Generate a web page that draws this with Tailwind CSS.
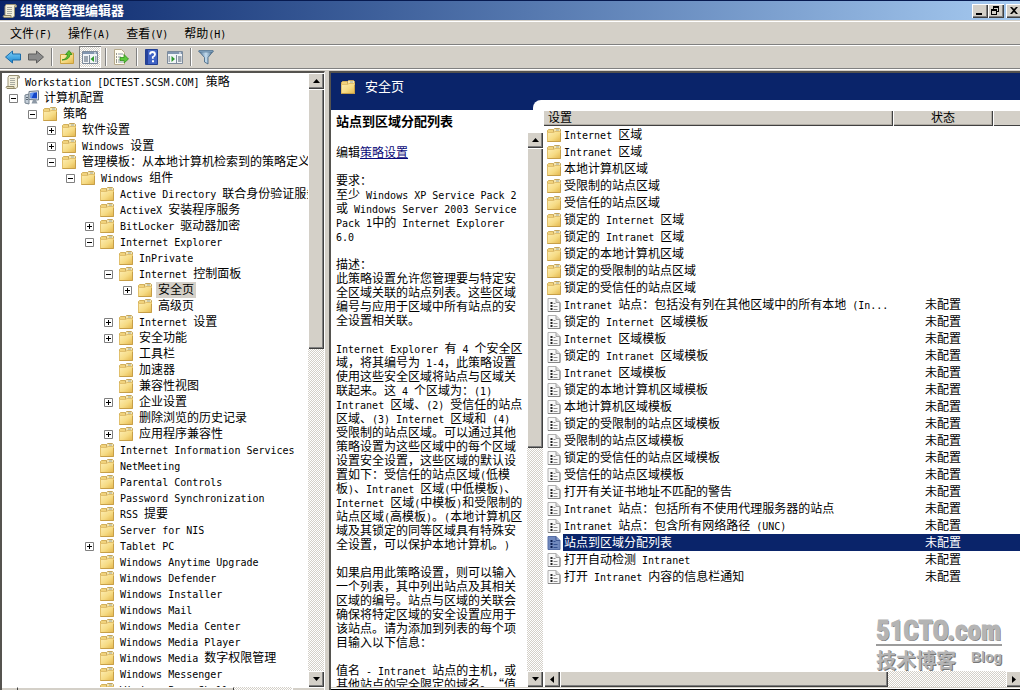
<!DOCTYPE html>
<html lang="zh-CN">
<head>
<meta charset="utf-8">
<title>组策略管理编辑器</title>
<script src="https://cdn.jsdelivr.net/npm/@tailwindcss/browser@4"></script>
</head>
<body class="h-screen overflow-hidden flex flex-col bg-[#d4d0c8] text-black text-[12px] leading-[16px] font-['DejaVu_Sans_Mono','Noto_Sans_CJK_SC',monospace] [text-spacing-trim:space-all]">

<svg class="absolute size-0" aria-hidden="true">
  <defs>
    <linearGradient id="fold" x1="0" y1="0" x2="1" y2="1"><stop offset="0" stop-color="#fdeeb4"/><stop offset=".55" stop-color="#f6db84"/><stop offset="1" stop-color="#e3b64c"/></linearGradient>
    <linearGradient id="blue" x1="0" y1="0" x2="0" y2="1"><stop offset="0" stop-color="#7fd0f8"/><stop offset="1" stop-color="#1a86d0"/></linearGradient>
    <linearGradient id="steel" x1="0" y1="0" x2="1" y2="0"><stop offset="0" stop-color="#4d7396"/><stop offset=".5" stop-color="#c4dcee"/><stop offset="1" stop-color="#3d6284"/></linearGradient>
  </defs>
  <symbol id="folder" viewBox="0 0 14 14">
    <path d="M.5 2.500 1.500 1.500H6L7 3V13H.5Z" fill="#f0d27c" stroke="#d3b05a"/>
    <path d="M6.500 3.500V1.500L7.500 .5H12.500L13.500 1.500V5H6.500Z" fill="#f7e6ac" stroke="#c4a45a"/>
    <path d="M9 2H12" stroke="#9aa9a8"/>
    <path d="M.5 4.500H6.500L8 3.500H13.500V13.500H.5Z" fill="url(#fold)" stroke="#e2c06c"/>
    <path d="M.5 13.500H13.500V5" fill="none" stroke="#c79f48"/>
  </symbol>
  <symbol id="doc" viewBox="0 0 13 14">
    <path d="M.5 .5H8.500L12.500 4.500V13.500H.5Z" fill="#f8f8f8" stroke="#b0b0b0"/>
    <path d="M8.500 .5V4.500H12.500" fill="#d6d6d6" stroke="#a3a3a3"/>
    <path d="M.5 13.500H12.500V5" fill="none" stroke="#858585"/>
    <path d="M3 4h2v2H3zM3 7h2v2H3zM3 10h2v2H3z" fill="#222"/>
    <path d="M6 5.500H8M6 8.500H10M6 11.500H10" stroke="#8e8e8e"/>
  </symbol>
  <symbol id="docsel" viewBox="0 0 13 14">
    <path d="M.5 .5H8.500L12.500 4.500V13.500H.5Z" fill="#7088bd" stroke="#566ea6"/>
    <path d="M8.500 .5V4.500H12.500" fill="#8c9fcb" stroke="#3f5894"/>
    <path d="M3 4h2v2H3zM3 7h2v2H3zM3 10h2v2H3z" fill="#0a1c50"/>
    <path d="M6 5.500H8M6 8.500H10M6 11.500H10" stroke="#33508f"/>
  </symbol>
  <symbol id="scroll" viewBox="0 0 16 16">
    <path d="M4 1.500H13Q15 1.500 14.500 4H12.500V13L11 14.500H3V3.500Z" fill="#f4f0dc" stroke="#9b9376"/>
    <path d="M1.500 12.500H9V14.500H2Q.5 13.500 1.500 12.500Z" fill="#e4ddbc" stroke="#8f8768"/>
    <path d="M12.500 4Q12.500 2 14 1.800" fill="none" stroke="#9b9376"/>
    <path d="M5 4.500H10M5 6.500H10M5 8.500H10M5 10.500H10" stroke="#a7a9a0"/>
  </symbol>
  <symbol id="computer" viewBox="0 0 16 16">
    <path d="M1 5 5 4V14L1 13Z" fill="#c6d0da" stroke="#75828f"/>
    <path d="M5 1.500 14.500 .8V10L5 9.500Z" fill="#e2e6ea" stroke="#6f7c8a"/>
    <path d="M6.500 3 13 2.300V8.600L6.500 8.300Z" fill="#1446c8"/>
    <path d="M6.500 3 10 2.700 7.500 8.300H6.500Z" fill="#5f94f4"/>
    <path d="M9 10H12L13.500 13.500H7.500Z" fill="#8d99a6"/>
    <path d="M2 7.500H4M2 9.500H4" stroke="#5c6874"/>
  </symbol>
</svg>

<header class="shrink-0 h-[20px] pl-[2px] flex items-center gap-[2px] border-t border-[#071a50] overflow-hidden bg-linear-to-r from-[#0a246a] to-[#a6caf0]">
  <svg class="size-4 shrink-0"><use href="#scroll"/></svg>
  <h1 class="flex-1 text-[13px] font-bold text-white">组策略管理编辑器</h1>
  <div class="flex -mr-[2px]">
    <button aria-label="最小化" class="w-4 h-[14px] flex bg-[#d4d0c8] shadow-[inset_1px_1px_0_#fff,inset_-1px_-1px_0_#404040,inset_-2px_-2px_0_#808080]"><svg class="w-4 h-[14px]" viewBox="0 0 16 14"><path d="M4 9h6v2H4z"/></svg></button>
    <button aria-label="还原" class="w-4 h-[14px] flex bg-[#d4d0c8] shadow-[inset_1px_1px_0_#fff,inset_-1px_-1px_0_#404040,inset_-2px_-2px_0_#808080]"><svg class="w-4 h-[14px]" viewBox="0 0 16 14"><path d="M5 2h6v6H9V7h1V4H6v1H5zM3 5h6v6H3zM4 7v3h4V7z" fill-rule="evenodd"/></svg></button>
    <button aria-label="关闭" class="ml-[2px] w-4 h-[14px] flex bg-[#d4d0c8] shadow-[inset_1px_1px_0_#fff,inset_-1px_-1px_0_#404040,inset_-2px_-2px_0_#808080]"><svg class="w-4 h-[14px]" viewBox="0 0 16 14"><path d="M4 3h2l2 2 2-2h2L9 6.500 12 10h-2L8 8l-2 2H4l3-3.500z"/></svg></button>
  </div>
</header>

<nav class="shrink-0 mt-px h-[24px] pl-[10px] pt-[2px] flex items-center gap-4 border-t border-t-white border-b border-b-[#808080]">
  <button data-mixed>文件(F)</button>
  <button data-mixed>操作(A)</button>
  <button data-mixed>查看(V)</button>
  <button data-mixed>帮助(H)</button>
</nav>

<div class="shrink-0 h-[24px] pl-[2px] flex items-center border-t border-t-white border-b border-b-[#808080]">
  <button aria-label="后退" class="size-[22px] grid place-items-center"><svg class="size-4" viewBox="0 0 16 16"><path d="M.5 8 7.500 2V5H15.500V11H7.500V14Z" fill="url(#blue)" stroke="#1b6ba8"/></svg></button>
  <button aria-label="前进" class="ml-px size-[22px] grid place-items-center"><svg class="size-4" viewBox="0 0 16 16"><path d="M15.500 8 8.500 2V5H.5V11H8.500V14Z" fill="#8c8c8c" stroke="#5c5c5c"/></svg></button>
  <i class="mx-1 mr-[3px] w-[2px] h-[18px] border-l border-[#808080] bg-white"></i>
  <button aria-label="向上一级" class="size-[22px] grid place-items-center"><svg class="size-4" viewBox="0 0 16 16"><path d="M1.500 5.500H8L9.500 4H14.500V14.500H1.500Z" fill="url(#fold)" stroke="#c9a040"/><path d="M3 11Q8 10 8.500 5.500H6.500L10 1.500 13 5.500H11Q10.500 11 3 11Z" fill="#58c02e" stroke="#2e8a18" stroke-width=".8"/></svg></button>
  <button aria-label="显示/隐藏控制台树" aria-pressed="true" class="ml-px size-[22px] grid place-items-center bg-[repeating-conic-gradient(#fff_0_25%,#d4d0c8_0_50%)] bg-[length:2px_2px] shadow-[inset_1px_1px_0_#808080,inset_-1px_-1px_0_#fff]"><svg class="size-4" viewBox="0 0 16 16"><path d="M.5 2.500h15v12H.5z" fill="#f2f5f8" stroke="#7d8b9b"/><path d="M1 3h14v2H1z" fill="#8296b0"/><path d="M12 4h2" stroke="#fff"/><path d="M7.500 6V14" stroke="#7d8b9b"/><path d="M2 8h4M2 10h4M2 12h4M13 8h1.500M13 10h1.500M13 12h1.500" stroke="#4a5a6c"/><path d="M12 7V13L8.500 10Z" fill="#2f9a2f"/></svg></button>
  <i class="mx-1 mr-[3px] w-[2px] h-[18px] border-l border-[#808080] bg-white"></i>
  <button aria-label="导出列表" class="size-[22px] grid place-items-center"><svg class="size-4" viewBox="0 0 16 16"><path d="M1.500 .5H8.500L11.500 3.500V15.500H1.500Z" fill="#fffdf0" stroke="#b5a98a"/><path d="M3 5h1M3 8h1M3 11h1M3 13h1" stroke="#333"/><path d="M5 5h5M5 8h3M5 11h3M5 13h5" stroke="#8e98a8"/><path d="M7 8.500H11V5.500L15.500 10 11 14V11.500H7Z" fill="#5cc83c" stroke="#2f8f1c" stroke-width=".8"/></svg></button>
  <i class="mx-1 mr-[3px] w-[2px] h-[18px] border-l border-[#808080] bg-white"></i>
  <button aria-label="帮助" class="size-[22px] grid place-items-center"><svg class="size-4" viewBox="0 0 16 16"><path d="M1.500 .5H13.500V15.500H1.500Z" fill="#3f62c4" stroke="#223f92"/><path d="M2 1h2v14H2z" fill="#27429a"/><path d="M6 5.500Q6 3 8.500 3T11 5.500Q11 7 8.800 8V9.800" fill="none" stroke="#fff" stroke-width="1.800"/><path d="M8 11.200h2v2H8z" fill="#fff"/></svg></button>
  <button aria-label="显示/隐藏操作窗格" class="ml-px size-[22px] grid place-items-center"><svg class="size-4" viewBox="0 0 16 16"><path d="M.5 2.500h15v12H.5z" fill="#f2f5f8" stroke="#7d8b9b"/><path d="M1 3h14v2H1z" fill="#8296b0"/><path d="M12 4h2" stroke="#fff"/><path d="M9.500 6V14" stroke="#7d8b9b"/><path d="M11 8h3.500M11 10h3.500M11 12h3.500M1.500 8H3M1.500 10H3M1.500 12H3" stroke="#4a5a6c"/><path d="M4.500 7V13L8 10Z" fill="#2f9a2f"/></svg></button>
  <i class="mx-1 mr-[3px] w-[2px] h-[18px] border-l border-[#808080] bg-white"></i>
  <button aria-label="筛选器" class="size-[22px] grid place-items-center"><svg class="size-4" viewBox="0 0 16 16"><path d="M.7 2H15.300L10 8.500V15L6.500 13V8.500Z" fill="url(#steel)" stroke="#3f6180" stroke-width=".8"/><path d="M1 1.500H15V3H1Z" fill="#8fb0cc" stroke="#4a6b89" stroke-width=".6"/></svg></button>
</div>

<main class="flex-1 min-h-0 flex border-t border-t-white">
  <aside class="w-[325px] shrink-0 mt-px flex flex-col border-l-2 border-t-2 border-[#55534f] border-r border-r-white">
    <div class="flex-1 min-h-0 flex bg-white">
      <ul id="tree" role="tree" class="flex-1 min-w-0 pt-px overflow-hidden whitespace-nowrap"></ul>
      <div class="w-4 flex flex-col bg-[repeating-conic-gradient(#fff_0_25%,#d4d0c8_0_50%)] bg-[length:2px_2px]">
        <button aria-label="向上滚动" class="size-4 grid place-items-center bg-[#d4d0c8] shadow-[inset_1px_1px_0_#fff,inset_-1px_-1px_0_#404040,inset_-2px_-2px_0_#808080]"><svg class="w-[7px] h-1" viewBox="0 0 7 4"><path d="M0 4 3.500 0 7 4Z"/></svg></button>
        <div class="h-[260px] bg-[#d4d0c8] shadow-[inset_1px_1px_0_#fff,inset_-1px_-1px_0_#404040,inset_-2px_-2px_0_#808080]"></div>
        <button aria-label="向下滚动" class="mt-auto size-4 grid place-items-center bg-[#d4d0c8] shadow-[inset_1px_1px_0_#fff,inset_-1px_-1px_0_#404040,inset_-2px_-2px_0_#808080]"><svg class="w-[7px] h-1" viewBox="0 0 7 4"><path d="M0 0 3.500 4 7 0Z"/></svg></button>
      </div>
    </div>
    <div class="h-[3px] flex bg-[repeating-conic-gradient(#fff_0_25%,#d4d0c8_0_50%)] bg-[length:2px_2px]">
      <div class="w-4 bg-[#d4d0c8] border-t border-r border-t-white border-r-[#404040]"></div>
      <div class="w-[216px] bg-[#d4d0c8] border-t border-r border-t-white border-r-[#404040]"></div>
      <div class="ml-auto w-8 bg-[#d4d0c8] border-t border-l border-white"></div>
    </div>
  </aside>

  <section class="ml-1 flex-1 min-w-0 mt-px flex flex-col border-l-2 border-t-2 border-[#55534f]">
    <div class="flex-1 min-h-0 flex flex-col bg-[#0a246a]">
      <h2 class="shrink-0 h-[27px] pl-[10px] flex items-center gap-[10px] text-[13px] text-white"><svg class="size-[14px]"><use href="#folder"/></svg>安全页</h2>
      <div class="flex-1 min-h-0 flex">
        <div class="w-[213px] shrink-0 flex flex-col">
          <div class="h-[10px] flex"><div class="ml-[202px] flex-1 bg-white rounded-tl-[8px]"></div></div>
          <div class="flex-1 min-h-0 flex bg-white">
            <article class="flex-1 min-w-0 pl-[5px] pt-[4px] overflow-hidden whitespace-nowrap leading-[14px]">
              <h3 class="text-[13px] font-bold leading-[16px]">站点到区域分配列表</h3>
              <p class="mt-4 mb-[14px]">编辑<a href="#" class="text-[#0a0a78] underline">策略设置</a></p>
              <p data-mixed>要求：<br>至少 Windows XP Service Pack 2<br>或 Windows Server 2003 Service<br>Pack 1中的 Internet Explorer<br>6.0</p>
              <p data-mixed class="mt-[14px]">描述：<br>此策略设置允许您管理要与特定安<br>全区域关联的站点列表。这些区域<br>编号与应用于区域中所有站点的安<br>全设置相关联。</p>
              <p data-mixed class="mt-[14px]">Internet Explorer 有 4 个安全区<br>域，将其编号为 1-4，此策略设置<br>使用这些安全区域将站点与区域关<br>联起来。这 4 个区域为：(1)<br>Intranet 区域、(2) 受信任的站点<br>区域、(3) Internet 区域和 (4)<br>受限制的站点区域。可以通过其他<br>策略设置为这些区域中的每个区域<br>设置安全设置，这些区域的默认设<br>置如下：受信任的站点区域(低模<br>板)、Intranet 区域(中低模板)、<br>Internet 区域(中模板)和受限制的<br>站点区域(高模板)。(本地计算机区<br>域及其锁定的同等区域具有特殊安<br>全设置，可以保护本地计算机。)</p>
              <p data-mixed class="mt-[14px]">如果启用此策略设置，则可以输入<br>一个列表，其中列出站点及其相关<br>区域的编号。站点与区域的关联会<br>确保将特定区域的安全设置应用于<br>该站点。请为添加到列表的每个项<br>目输入以下信息：</p>
              <p data-mixed class="mt-[14px]">值名 - Intranet 站点的主机，或<br>其他站点的完全限定的域名。“值</p>
            </article>
            <div class="w-4 mr-px mt-[22px] flex flex-col bg-[repeating-conic-gradient(#fff_0_25%,#d4d0c8_0_50%)] bg-[length:2px_2px]">
              <button aria-label="向上滚动说明" class="size-4 grid place-items-center bg-[#d4d0c8] shadow-[inset_1px_1px_0_#fff,inset_-1px_-1px_0_#404040,inset_-2px_-2px_0_#808080]"><svg class="w-[7px] h-1" viewBox="0 0 7 4"><path d="M0 4 3.500 0 7 4Z"/></svg></button>
              <div class="h-[54%] bg-[#d4d0c8] shadow-[inset_1px_1px_0_#fff,inset_-1px_-1px_0_#404040,inset_-2px_-2px_0_#808080]"></div>
              <button aria-label="向下滚动说明" class="mt-auto size-4 grid place-items-center bg-[#d4d0c8] shadow-[inset_1px_1px_0_#fff,inset_-1px_-1px_0_#404040,inset_-2px_-2px_0_#808080]"><svg class="w-[7px] h-1" viewBox="0 0 7 4"><path d="M0 0 3.500 4 7 0Z"/></svg></button>
            </div>
          </div>
        </div>

        <div class="relative flex-1 min-w-0 pt-[10px] flex flex-col bg-white">
          <div class="flex-1 min-h-0 overflow-hidden">
            <table class="w-full table-fixed border-collapse whitespace-nowrap">
              <colgroup><col class="w-[349px]"><col class="w-[100px]"><col></colgroup>
              <thead>
                <tr class="h-4 bg-[#d4d0c8]">
                  <th class="p-0 pl-[4px] h-4 leading-[16px] text-left font-normal shadow-[inset_0_1px_0_#fff,inset_-1px_-1px_0_#404040,inset_-2px_-2px_0_#b0aca4]">设置</th>
                  <th class="p-0 h-4 leading-[16px] font-normal shadow-[inset_1px_1px_0_#fff,inset_-1px_-1px_0_#404040,inset_-2px_-2px_0_#b0aca4]">状态</th>
                  <th class="p-0 h-4 shadow-[inset_1px_1px_0_#fff,inset_0_-1px_0_#404040]"></th>
                </tr>
              </thead>
              <tbody id="settings"></tbody>
            </table>
          </div>
          <div class="absolute right-[18px] bottom-[14px] w-[126px] text-[#b4b4b4] [text-shadow:1px_1px_0_#777] pointer-events-none">
            <div class="h-[30px] leading-[30px] whitespace-nowrap text-[27px] font-bold [-webkit-text-stroke:1px_#b4b4b4] font-['Liberation_Sans_Narrow','Roboto_Condensed','Liberation_Sans',sans-serif] border-b-2 border-[#9c9c9c]">51CTO.com</div>
            <div class="flex justify-between"><span class="pt-[3px] text-[20px] leading-[24px] font-bold">技术博客</span><span class="text-[14px] leading-[22px] font-bold font-['Liberation_Sans',sans-serif]">Blog</span></div>
          </div>
          <div class="h-4 shrink-0 flex bg-[repeating-conic-gradient(#fff_0_25%,#d4d0c8_0_50%)] bg-[length:2px_2px]">
            <button aria-label="向左滚动" class="size-4 grid place-items-center bg-[#d4d0c8] shadow-[inset_1px_1px_0_#fff,inset_-1px_-1px_0_#404040,inset_-2px_-2px_0_#808080]"><svg class="w-1 h-[7px]" viewBox="0 0 4 7"><path d="M4 0 0 3.500 4 7Z"/></svg></button>
            <div class="w-[69%] bg-[#d4d0c8] shadow-[inset_1px_1px_0_#fff,inset_-1px_-1px_0_#404040,inset_-2px_-2px_0_#808080]"></div>
            <button aria-label="向右滚动" class="ml-auto -mr-[2px] size-4 grid place-items-center bg-[#d4d0c8] shadow-[inset_1px_1px_0_#fff,inset_-1px_-1px_0_#404040,inset_-2px_-2px_0_#808080]"><svg class="w-1 h-[7px]" viewBox="0 0 4 7"><path d="M0 0 4 3.500 0 7Z"/></svg></button>
          </div>
        </div>
      </div>
    </div>
    <div class="h-[3px] bg-white border-t border-t-[#d4d0c8] border-b border-b-black"></div>
  </section>
</main>

<script>
// Latin runs take half the width of a Chinese character; the curly quote takes a full one.
const mixed = s => s
  .replace(/[\x20-\x7e]+/g, m => `<span class="text-[10px] leading-[10px] whitespace-pre">${m}</span>`)
  .replace('“', `<span class="font-['Noto_Sans_CJK_SC'] leading-[10px]">“</span>`);

// [level, expander, label]
const tree = [
  [0,'','Workstation [DCTEST.SCSM.COM] 策略'],[1,'-','计算机配置'],[2,'-','策略'],[3,'+','软件设置'],[3,'+','Windows 设置'],
  [3,'-','管理模板：从本地计算机检索到的策略定义'],[4,'-','Windows 组件'],[5,'','Active Directory 联合身份验证服务'],[5,'','ActiveX 安装程序服务'],
  [5,'+','BitLocker 驱动器加密'],[5,'-','Internet Explorer'],[6,'','InPrivate'],[6,'-','Internet 控制面板'],[7,'+','安全页'],[7,'','高级页'],
  [6,'+','Internet 设置'],[6,'+','安全功能'],[6,'','工具栏'],[6,'','加速器'],[6,'','兼容性视图'],[6,'+','企业设置'],[6,'','删除浏览的历史记录'],
  [6,'+','应用程序兼容性'],[5,'','Internet Information Services'],[5,'','NetMeeting'],[5,'','Parental Controls'],[5,'','Password Synchronization'],
  [5,'','RSS 提要'],[5,'','Server for NIS'],[5,'+','Tablet PC'],[5,'','Windows Anytime Upgrade'],[5,'','Windows Defender'],[5,'','Windows Installer'],
  [5,'','Windows Mail'],[5,'','Windows Media Center'],[5,'','Windows Media Player'],[5,'','Windows Media 数字权限管理'],[5,'','Windows Messenger'],[5,'','Windows PowerShell']
];
document.getElementById('tree').innerHTML = tree.map(([level, exp, label]) => {
  const box = exp
    ? `<button aria-label="${exp === '+' ? '展开' : '折叠'} ${label}" class="w-[9px] h-[9px] mr-[6px] shrink-0 bg-white"><svg class="w-[9px] h-[9px]" viewBox="0 0 9 9"><path d="M.5 .5h8v8h-8z" fill="#fff" stroke="#808080"/><path d="${exp === '+' ? 'M2 4.5h5M4.5 2v5' : 'M2 4.5h5'}" stroke="#000"/></svg></button>`
    : '<span class="w-[9px] mr-[6px] shrink-0"></span>';
  const icon = level === 0 ? 'scroll' : level === 1 ? 'computer' : 'folder';
  const size = level < 2 ? 'size-4' : 'size-[14px]';
  const pick = label === '安全页' ? 'ml-[4px] px-[2px] bg-[#d4d0c8]' : level < 2 ? 'ml-[4px]' : 'ml-[6px]';
  return `<li role="treeitem" aria-level="${level + 1}" class="h-4 flex items-center" style="padding-left:${level ? 19 * level - 12 : 3}px">${level ? box : ''}<svg class="${size} shrink-0"><use href="#${icon}"/></svg><span class="${pick}">${mixed(label)}</span></li>`;
}).join('');

const folders = ['Internet 区域','Intranet 区域','本地计算机区域','受限制的站点区域','受信任的站点区域','锁定的 Internet 区域','锁定的 Intranet 区域','锁定的本地计算机区域','锁定的受限制的站点区域','锁定的受信任的站点区域'];
const policies = ['Intranet 站点：包括没有列在其他区域中的所有本地 (In...','锁定的 Internet 区域模板','Internet 区域模板','锁定的 Intranet 区域模板','Intranet 区域模板','锁定的本地计算机区域模板','本地计算机区域模板','锁定的受限制的站点区域模板','受限制的站点区域模板','锁定的受信任的站点区域模板','受信任的站点区域模板','打开有关证书地址不匹配的警告','Intranet 站点：包括所有不使用代理服务器的站点','Intranet 站点：包含所有网络路径 (UNC)','站点到区域分配列表','打开自动检测 Intranet','打开 Intranet 内容的信息栏通知'];
const row = (label, folder) => {
  const sel = label === '站点到区域分配列表';
  const bg = sel ? 'bg-[#0a246a] text-white' : '';
  const icon = folder ? 'folder' : sel ? 'docsel' : 'doc';
  return `<tr class="h-[17px]"><td class="p-0"><div class="flex items-center pl-[3px] h-[17px]"><svg class="size-[14px] mr-[2px] shrink-0"><use href="#${icon}"/></svg><span class="flex-1 h-[17px] pl-px leading-[18px] ${bg}">${mixed(label)}</span></div></td><td class="p-0 text-center ${bg}"><div class="h-[17px] leading-[18px]">${folder ? '' : '未配置'}</div></td><td class="p-0 ${bg}"></td></tr>`;
};
document.getElementById('settings').innerHTML = folders.map(f => row(f, true)).join('') + policies.map(p => row(p, false)).join('');

document.querySelectorAll('[data-mixed]').forEach(el => {
  el.innerHTML = el.innerHTML.split('<br>').map(mixed).join('<br>');
});
</script>
</body>
</html>
